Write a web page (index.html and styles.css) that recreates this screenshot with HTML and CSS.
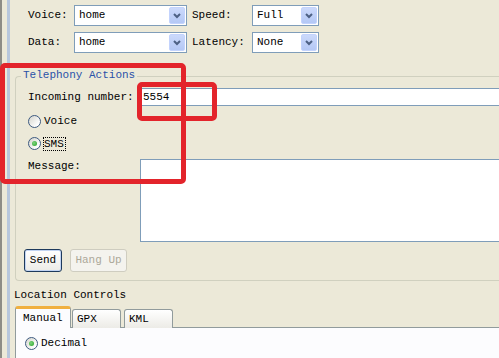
FILE: index.html
```html
<!DOCTYPE html>
<html>
<head>
<meta charset="utf-8">
<link rel="stylesheet" href="styles.css">
</head>
<body>
<div class="frame">
  <div class="pane">
    <div class="net">
      <span class="lbl">Voice:</span>
      <div class="combo c-wide"><span class="val">home</span><span class="arrow"><svg width="14" height="15" viewBox="0 0 14 15"><polyline points="4,6 7,9 10,6" fill="none" stroke="#4d6185" stroke-width="2"/></svg></span></div>
      <span class="lbl lbl2">Speed:</span>
      <div class="combo"><span class="val">Full</span><span class="arrow"><svg width="14" height="15" viewBox="0 0 14 15"><polyline points="4,6 7,9 10,6" fill="none" stroke="#4d6185" stroke-width="2"/></svg></span></div>
      <span class="lbl">Data:</span>
      <div class="combo c-wide"><span class="val">home</span><span class="arrow"><svg width="14" height="15" viewBox="0 0 14 15"><polyline points="4,6 7,9 10,6" fill="none" stroke="#4d6185" stroke-width="2"/></svg></span></div>
      <span class="lbl lbl2">Latency:</span>
      <div class="combo"><span class="val">None</span><span class="arrow"><svg width="14" height="15" viewBox="0 0 14 15"><polyline points="4,6 7,9 10,6" fill="none" stroke="#4d6185" stroke-width="2"/></svg></span></div>
    </div>

    <div class="group">
      <div class="legend">Telephony Actions</div>
      <div class="trow incoming">
        <span class="tlbl">Incoming number:</span>
        <div class="input">5554</div>
      </div>
      <div class="radio-row"><span class="radio"></span><span>Voice</span></div>
      <div class="radio-row"><span class="radio on"></span><span class="focus">SMS</span></div>
      <div class="trow msg">
        <span class="tlbl msg-lbl">Message:</span>
        <div class="textarea"></div>
      </div>
      <div class="buttons">
        <span class="btn def">Send</span>
        <span class="btn dis">Hang Up</span>
      </div>
    </div>

    <div class="loc-title">Location Controls</div>
    <div class="tabs">
      <span class="tab sel">Manual</span>
      <span class="tab t-gpx">GPX</span>
      <span class="tab t-kml">KML</span>
    </div>
    <div class="panel">
      <div class="radio-row first"><span class="radio on"></span><span>Decimal</span></div>
    </div>
  </div>
</div>
<div class="mark m1"></div>
<div class="mark m2"></div>
</body>
</html>
```

FILE: styles.css
```css
html { overflow: hidden; }
body {
  margin: 0;
  width: 620px;
  background: #ece9d8;
  font: 11px/13px "Liberation Mono", "DejaVu Sans Mono", monospace;
  color: #000;
}
.frame {
  border-left: 2px solid #8e8d86;
  padding-left: 5px;
  min-height: 358px;
}
.pane {
  border-left: 3px solid #b8c7dc;
  padding-top: 5px;
  min-height: 358px;
}
.net {
  display: grid;
  grid-template-columns: 46px 113px 65px 67px;
  grid-auto-rows: 21px;
  row-gap: 6px;
  padding-left: 18px;
  align-items: center;
}
.lbl2 { padding-left: 5px; }
.combo {
  height: 21px;
  box-sizing: border-box;
  border: 1px solid #7f9db9;
  background: #fff;
  padding: 1px;
  display: flex;
  align-items: stretch;
}
.combo .val { flex: 1; padding-left: 3px; line-height: 17px; }
.arrow {
  width: 16px;
  box-sizing: border-box;
  border: 1px solid #c3d3fd;
  border-radius: 2px;
  background: linear-gradient(#cbd9fb, #b4c8f5);
  display: flex;
  align-items: center;
  justify-content: center;
}
.group {
  margin: 23px 0 0 5px;
  border: 1px solid #d0d0bf;
  border-right: 0;
  border-radius: 4px 0 0 4px;
  padding: 0 0 8px 12px;
}
.legend {
  width: max-content;
  margin: -8px 0 0 -7px;
  padding: 0 2px;
  background: #ece9d8;
  color: #2a52a8;
}
.trow { display: flex; align-items: center; }
.tlbl { width: 112px; flex: none; }
.incoming { margin-top: 6px; }
.input {
  flex: 1;
  height: 18px;
  box-sizing: border-box;
  border: 1px solid #7f9db9;
  background: #fff;
  padding-left: 2px;
  line-height: 16px;
}
.radio-row {
  display: flex;
  align-items: center;
  gap: 3px;
  height: 13px;
  margin-top: 9px;
}
.radio {
  width: 13px;
  height: 13px;
  box-sizing: border-box;
  border: 1px solid #3d5a80;
  border-radius: 50%;
  background: linear-gradient(135deg, #d4d4cc, #fff 80%);
  display: flex;
  align-items: center;
  justify-content: center;
  flex: none;
}
.radio.on::after {
  content: "";
  width: 5px;
  height: 5px;
  border-radius: 50%;
  background: radial-gradient(circle at 40% 40%, #7fd47f, #21a121);
}
.focus {
  border: 1px dotted #000;
  line-height: 12px;
  padding: 0 1px 0 0;
  margin-left: -1px;
}
.msg { margin-top: 9px; align-items: flex-start; }
.msg-lbl { padding-top: 1px; }
.textarea {
  flex: 1;
  height: 83px;
  box-sizing: border-box;
  border: 1px solid #7f9db9;
  background: #fff;
}
.buttons {
  display: flex;
  gap: 8px;
  margin: 7px 0 0 -4px;
}
.btn {
  height: 23px;
  box-sizing: border-box;
  border-radius: 3px;
  display: flex;
  align-items: center;
  justify-content: center;
}
.btn.def {
  width: 38px;
  border: 1px solid #1e3a5c;
  background: linear-gradient(#ffffff, #ecebe6);
  box-shadow: inset 0 0 0 1px #c2d4f2;
}
.btn.dis {
  width: 57px;
  border: 1px solid #cfcdc0;
  background: #f4f3ee;
  color: #aca899;
}
.loc-title { margin: 8px 0 0 4px; }
.tabs {
  display: flex;
  align-items: flex-end;
  margin: 4px 0 0 5px;
  height: 22px;
}
.tab {
  height: 19px;
  box-sizing: border-box;
  border: 1px solid #919b9c;
  border-bottom: 0;
  border-radius: 3px 3px 0 0;
  background: linear-gradient(#ffffff, #ecebe6);
  padding-left: 4px;
  line-height: 18px;
  width: 49px;
}
.tab.sel {
  position: relative;
  width: 56px;
  height: 22px;
  border-top: 3px solid #f0b040;
  background: #fcfcfe;
  padding-left: 7px;
  line-height: 19px;
}
.t-gpx { margin-left: 1px; }
.t-kml { margin-left: 3px; }
.panel {
  margin: -1px 0 0 5px;
  border-top: 1px solid #919b9c;
  border-left: 1px solid #919b9c;
  background: #fcfcfe;
  padding: 9px 0 0 9px;
  height: 40px;
}
.panel .radio-row.first { margin-top: 0; }
.mark {
  position: absolute;
  box-sizing: border-box;
  border: 5px solid #e3242b;
  border-radius: 5px;
}
.m1 { left: 0; top: 63px; width: 186px; height: 121px; }
.m2 { left: 137px; top: 82px; width: 80px; height: 39px; }
```
